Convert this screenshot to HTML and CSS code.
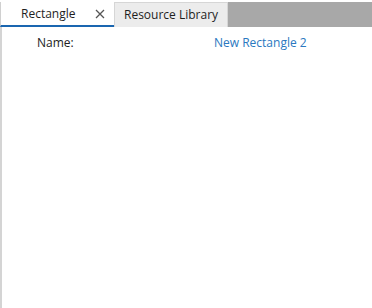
FILE: index.html
```html
<!DOCTYPE html>
<html>
<head>
<meta charset="utf-8">
<link rel="stylesheet" href="styles.css">
</head>
<body>
<div class="panel">
  <div class="tabs">
    <div class="tab active">
      <span class="tab-label">Rectangle</span>
      <svg class="close" width="10" height="10" viewBox="0 0 10 10"><path d="M1 1L9 9M9 1L1 9" stroke="#555" stroke-width="1.3"/></svg>
    </div>
    <div class="tab">
      <span class="tab-label">Resource Library</span>
    </div>
    <div class="tab-fill"></div>
  </div>
  <div class="content">
    <div class="row">
      <span class="label">Name:</span>
      <span class="value">New Rectangle 2</span>
    </div>
  </div>
</div>
</body>
</html>
```
FILE: styles.css
```css
html, body {
  margin: 0;
  padding: 0;
  background: #fff;
}
body {
  font-family: "Open Sans", "Noto Sans", sans-serif;
  font-size: 12px;
  color: #222;
}
.panel {
  width: 372px;
  height: 308px;
  display: flex;
  flex-direction: column;
  box-sizing: border-box;
  padding-top: 2px;
}
.tabs {
  display: flex;
  height: 25px;
  background: #a8a8a8;
  flex: none;
}
.tab {
  display: flex;
  align-items: center;
  box-sizing: border-box;
  height: 25px;
  background: #ececec;
  border: 1px solid #d6d6d6;
  border-bottom: none;
  padding: 0 9px;
}
.tab.active {
  width: 114px;
  background: #fff;
  border: none;
  border-left: 1px solid #d0d0d0;
  border-bottom: 2px solid #1a66b0;
  padding: 0 0 0 20px;
}
.tab.active .tab-label {
  flex: 1;
}
.close {
  margin-right: 9px;
}
.tab-label {
  color: #1e1e1e;
  line-height: 16px;
}
.tab-fill {
  flex: 1;
}
.content {
  flex: 1;
  border-left: 2px solid #d4d4d4;
}
.row {
  display: flex;
  padding: 8px 0 0 35px;
  line-height: 16px;
}
.label {
  width: 177px;
  color: #222;
}
.value {
  color: #2a78c0;
}
```
